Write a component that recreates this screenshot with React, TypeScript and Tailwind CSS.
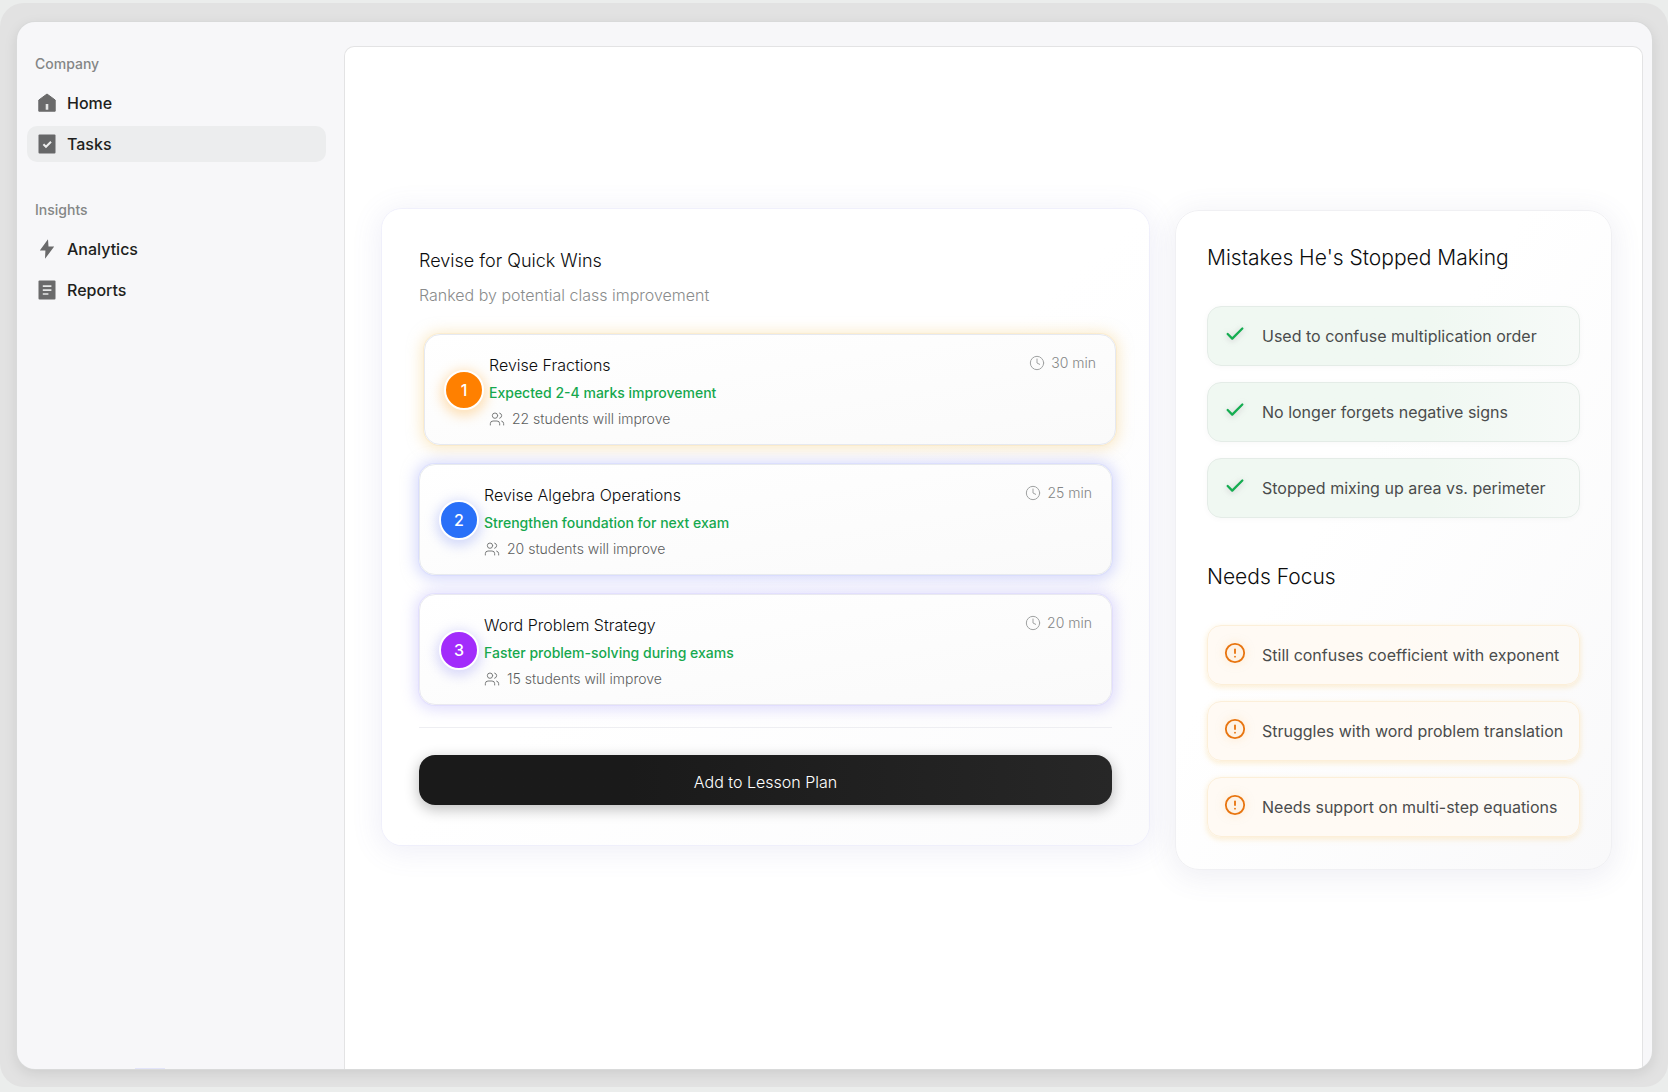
import React from "react";
import { Check, CircleAlert, Clock, Users } from "lucide-react";

function HomeIcon() {
  return (
    <svg viewBox="0 0 18 20" className="h-5 w-[18px]" aria-hidden="true">
      <path d="M9 1 17.2 7v11.2H.8V7Z" fill="#6a6a6b" stroke="#6a6a6b" strokeWidth="1" strokeLinejoin="round" />
      <path d="M7.7 11h2.6v5.8H7.7Z" fill="#e4e5e5" />
    </svg>
  );
}

function TasksIcon() {
  return (
    <svg viewBox="0 0 18 20" className="h-5 w-[18px]" aria-hidden="true">
      <rect x=".5" y=".5" width="17" height="19" rx="1" fill="#666768" />
      <path d="m5.4 10.2 2.6 2.6 5-5" fill="none" stroke="#eceded" strokeWidth="2" />
    </svg>
  );
}

function BoltIcon() {
  return (
    <svg viewBox="0 0 18 20" className="h-5 w-[18px]" aria-hidden="true">
      <path d="M10 .3 1.8 11.6h5.6L7 19.8l9.2-12.2h-5.7Z" fill="#6a6a6b" />
    </svg>
  );
}

function ReportsIcon() {
  return (
    <svg viewBox="0 0 18 20" className="h-5 w-[18px]" aria-hidden="true">
      <rect x=".5" y=".5" width="17" height="19" rx="1" fill="#6a6a6b" />
      <path d="M4.8 6.2h8.6M4.8 10.2h8.6M4.8 14h5.6" fill="none" stroke="#e6e7e7" strokeWidth="1.7" />
    </svg>
  );
}

type NavEntry = { label: string; icon: React.ReactNode; active?: boolean };

function NavGroup({ title, entries }: { title: string; entries: NavEntry[] }) {
  return (
    <section>
      <h2 className="px-2 text-sm leading-5 font-medium text-[#848686]">{title}</h2>
      <ul className="mt-[11px] flex flex-col gap-[5px]">
        {entries.map((e) => (
          <li key={e.label}>
            <a
              href="#"
              aria-current={e.active ? "page" : undefined}
              className={
                e.active
                  ? "flex h-9 items-center gap-[11px] rounded-[10px] bg-[#ecedee] px-[11px] text-base font-medium text-[#1e1f20]"
                  : "flex h-9 items-center gap-[11px] rounded-[10px] px-[11px] text-base font-medium text-[#1e1f20]"
              }
            >
              {e.icon}
              {e.label}
            </a>
          </li>
        ))}
      </ul>
    </section>
  );
}

const topics = [
  {
    rank: 1,
    title: "Revise Fractions",
    note: "Expected 2-4 marks improvement",
    students: "22 students will improve",
    time: "30 min",
    card: "ml-[5px] -mr-1 border-[#e6e9f0] shadow-[0_0_0_1px_rgba(250,225,180,0.35),0_1px_14px_3px_rgba(248,215,150,0.5)]",
    badge: "bg-[#ff8000] shadow-[0_3px_12px_3px_rgba(255,190,100,0.45)]",
  },
  {
    rank: 2,
    title: "Revise Algebra Operations",
    note: "Strengthen foundation for next exam",
    students: "20 students will improve",
    time: "25 min",
    card: "border-[#e7eaee] shadow-[0_0_0_1px_rgba(205,210,255,0.4),0_1px_14px_4px_rgba(180,185,250,0.5)]",
    badge: "bg-[#2970f8] shadow-[0_3px_12px_3px_rgba(150,165,245,0.4)]",
  },
  {
    rank: 3,
    title: "Word Problem Strategy",
    note: "Faster problem-solving during exams",
    students: "15 students will improve",
    time: "20 min",
    card: "border-[#e9e9f0] shadow-[0_0_0_1px_rgba(215,210,255,0.4),0_1px_14px_4px_rgba(190,183,250,0.45)]",
    badge: "bg-[#a22cfb] shadow-[0_3px_12px_3px_rgba(165,165,245,0.4)]",
  },
];

const stopped = [
  "Used to confuse multiplication order",
  "No longer forgets negative signs",
  "Stopped mixing up area vs. perimeter",
];

const focus = [
  "Still confuses coefficient with exponent",
  "Struggles with word problem translation",
  "Needs support on multi-step equations",
];

function QuickWins() {
  return (
    <section className="flex-1 rounded-[20px] bg-linear-to-br from-white from-50% to-[#fbfbfc] px-[37px] pt-[38px] pb-10 shadow-[0_0_0_1px_rgba(235,235,252,0.6),0_4px_28px_4px_rgba(110,110,190,0.1)]">
      <h2 className="text-lg leading-7 font-light text-[#0c0d0e]">Revise for Quick Wins</h2>
      <p className="mt-2 text-base leading-6 font-light text-[#8a8c8c]">Ranked by potential class improvement</p>
      <ol className="mt-[27px] flex flex-col gap-[19px]">
        {topics.map((t) => (
          <li
            key={t.rank}
            className={`flex h-[111px] items-center rounded-2xl border bg-linear-to-br from-white to-[#fafafa] pr-[19px] pl-[19px] ${t.card}`}
          >
            <span
              className={`flex size-10 shrink-0 items-center justify-center rounded-full border-2 border-white text-base font-medium text-white ${t.badge}`}
            >
              {t.rank}
            </span>
            <div className="ml-[5px] flex-1 pt-1">
              <h3 className="text-base leading-6 font-light text-[#0c0d0e]">{t.title}</h3>
              <p className="mt-1 text-sm leading-6 font-medium text-[#16a84e]">{t.note}</p>
              <p className="mt-[2px] flex items-center gap-[7px] text-sm leading-6 font-light text-[#5c5e5e]">
                <Users className="size-4" color="#7b7d7d" strokeWidth={1.5} aria-hidden="true" />
                {t.students}
              </p>
            </div>
            <p className="mt-4 flex items-center gap-[6px] self-start text-sm leading-6 font-light text-[#848686]">
              <Clock className="size-4" color="#a0a2a2" strokeWidth={1.5} aria-hidden="true" />
              {t.time}
            </p>
          </li>
        ))}
      </ol>
      <hr className="mt-[22px] border-t border-[#eeeef2]" />
      <button
        type="button"
        className="mt-[27px] flex h-[50px] w-full items-center justify-center rounded-2xl bg-linear-to-r from-[#1a1a1a] from-30% to-[#272727] pt-1 text-base font-light text-white shadow-[0_4px_14px_1px_rgba(0,0,0,0.24)]"
      >
        Add to Lesson Plan
      </button>
    </section>
  );
}

function StudentNotes() {
  return (
    <section className="mt-px w-[437px] shrink-0 rounded-3xl border border-[#f0f0f3] bg-linear-to-br from-white from-40% to-[#f9f9fa] px-[31px] pt-[31px] pb-8 shadow-[0_5px_28px_4px_rgba(90,90,140,0.09)]">
      <h2 className="text-[21px] leading-8 font-light text-[#0c0d0e]">Mistakes He's Stopped Making</h2>
      <ul className="mt-8 flex flex-col gap-4">
        {stopped.map((s) => (
          <li
            key={s}
            className="flex h-[60px] items-center gap-4 rounded-[14px] border border-[#e4ece7] bg-linear-to-r from-[#f0f8f2] from-60% to-[#f7faf8] pl-4 text-base text-[#4a4c4c] shadow-[0_1px_6px_rgba(0,0,0,0.03)]"
          >
            <Check className="mb-1 size-[22px] drop-shadow-[0_1px_3px_rgba(120,100,120,0.35)]" color="#15ad51" strokeWidth={2.5} aria-hidden="true" />
            {s}
          </li>
        ))}
      </ul>
      <h2 className="mt-[43px] text-[21px] leading-8 font-light text-[#0c0d0e]">Needs Focus</h2>
      <ul className="mt-8 flex flex-col gap-4">
        {focus.map((s) => (
          <li
            key={s}
            className="flex h-[60px] items-center gap-4 rounded-[14px] border border-[#fcefd9] bg-linear-to-r from-[#fffaf4] from-50% to-[#fcfaf7] pl-4 text-base text-[#4a4c4c] shadow-[0_2px_5px_1px_rgba(250,215,150,0.35)]"
          >
            <CircleAlert className="mb-1 size-[22px] drop-shadow-[0_0_4px_rgba(250,190,110,0.5)]" color="#e87510" strokeWidth={2} aria-hidden="true" />
            {s}
          </li>
        ))}
      </ul>
    </section>
  );
}

export default function App() {
  return (
    <div className="flex min-h-screen flex-col bg-[#ebedec] pt-[3px] pb-[5px] font-['Inter',sans-serif]">
      <div className="flex flex-1 flex-col rounded-3xl bg-[#e2e2e2] pt-[19px] pr-4 pb-[18px] pl-[17px]">
        <div className="flex flex-1 overflow-hidden rounded-[18px] bg-[#f7f7f9] pr-[9px] shadow-[0_0_0_1px_#d9dada,0_4px_14px_rgba(0,0,0,0.1)]">
          <nav className="flex w-[327px] shrink-0 flex-col gap-[38px] pt-8 pr-[18px] pl-[10px]" aria-label="Main">
            <NavGroup
              title="Company"
              entries={[
                { label: "Home", icon: <HomeIcon /> },
                { label: "Tasks", icon: <TasksIcon />, active: true },
              ]}
            />
            <NavGroup
              title="Insights"
              entries={[
                { label: "Analytics", icon: <BoltIcon /> },
                { label: "Reports", icon: <ReportsIcon /> },
              ]}
            />
            <div className="mt-auto ml-[108px] h-px w-[30px] bg-[#e2e4fa]" />
          </nav>
          <main className="mt-6 flex flex-1 items-start gap-[26px] rounded-t-[10px] border border-b-0 border-[#e3e3e4] bg-white pt-[162px] pr-[30px] pb-10 pl-[37px]">
            <QuickWins />
            <StudentNotes />
          </main>
        </div>
      </div>
    </div>
  );
}
